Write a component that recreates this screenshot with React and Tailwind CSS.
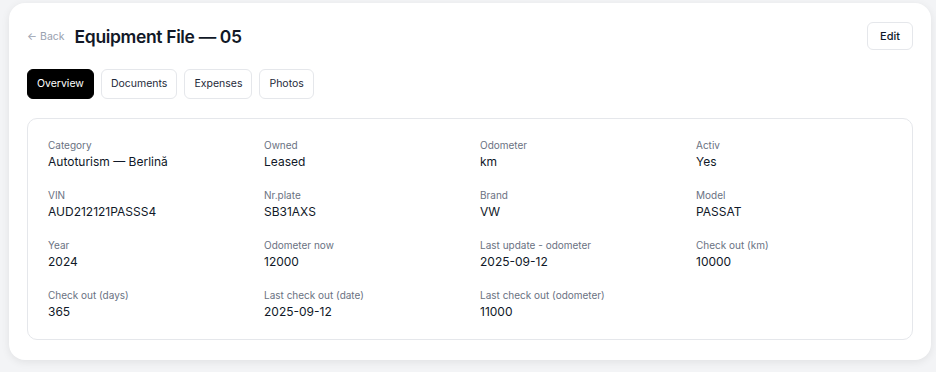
import React from "react";

const fields = [
  ["Category", "Autoturism — Berlină"],
  ["Owned", "Leased"],
  ["Odometer", "km"],
  ["Activ", "Yes"],
  ["VIN", "AUD212121PASSS4"],
  ["Nr.plate", "SB31AXS"],
  ["Brand", "VW"],
  ["Model", "PASSAT"],
  ["Year", "2024"],
  ["Odometer now", "12000"],
  ["Last update - odometer", "2025-09-12"],
  ["Check out (km)", "10000"],
  ["Check out (days)", "365"],
  ["Last check out (date)", "2025-09-12"],
  ["Last check out (odometer)", "11000"],
];

const tabs = ["Overview", "Documents", "Expenses", "Photos"];

export default function App() {
  return (
    <div
      className="min-h-[372px] bg-[#f3f4f6] pl-[9px] pr-[5px] pt-[3px]"
      style={{ fontFamily: "Inter, 'Noto Sans', sans-serif" }}
    >
      <div className="rounded-[16px] bg-white px-[18px] pb-[20px] pt-[19px] shadow-[0_2px_8px_rgba(0,0,0,0.08)]">
        {/* header */}
        <div className="flex h-[28px] items-center justify-between">
          <div className="flex items-center gap-[10px] pt-[2px]">
            <button className="flex items-center gap-[3px] text-[10.5px] text-gray-400">
              <span>←</span>
              <span>Back</span>
            </button>
            <h1 className="text-[17.5px] font-semibold tracking-[-0.02em] text-[#111827]">
              Equipment File — 05
            </h1>
          </div>
          <button className="h-[28px] rounded-[6px] border border-gray-200 px-[12px] text-[11px] font-medium text-gray-900">
            Edit
          </button>
        </div>

        {/* tabs */}
        <div className="mt-[19px] flex gap-[7px]">
          {tabs.map((t, i) => (
            <button
              key={t}
              className={
                i === 0
                  ? "h-[30px] rounded-[6px] border border-black bg-black px-[9px] text-[10.5px] text-white"
                  : "h-[30px] rounded-[6px] border border-gray-200 bg-white px-[9px] text-[10.5px] text-gray-800"
              }
            >
              {t}
            </button>
          ))}
        </div>

        {/* details */}
        <div className="mt-[19px] rounded-[10px] border border-gray-200 px-[20px] py-[19px]">
          <div className="grid grid-cols-4 gap-x-[20px] gap-y-[18px]">
            {fields.map(([label, value]) => (
              <div key={label} className="flex flex-col gap-[2px]">
                <div className="text-[10px] leading-[14px] text-gray-500">{label}</div>
                <div className="text-[12px] leading-[16px] text-gray-900">{value}</div>
              </div>
            ))}
          </div>
        </div>
      </div>
    </div>
  );
}
